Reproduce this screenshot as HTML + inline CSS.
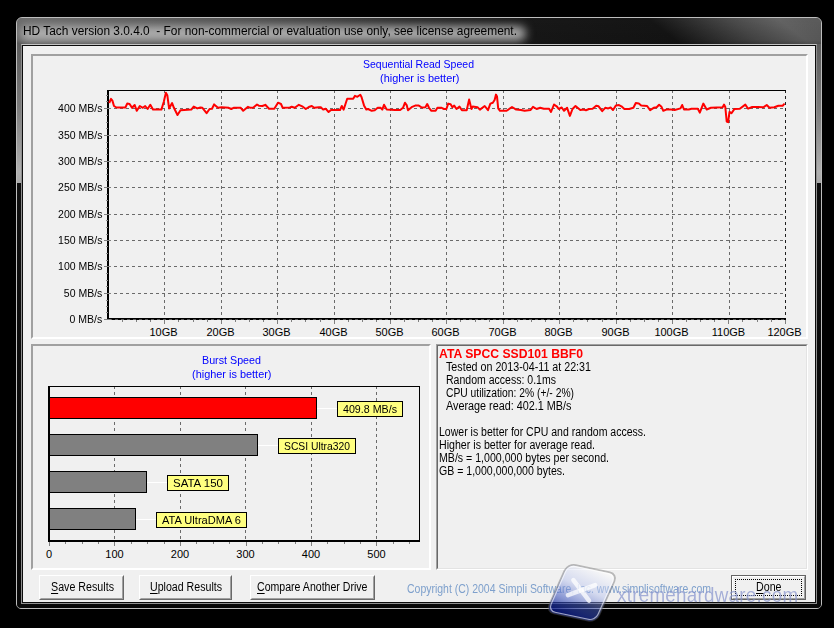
<!DOCTYPE html>
<html><head><meta charset="utf-8"><style>
*{margin:0;padding:0;box-sizing:border-box}
html,body{width:834px;height:628px;overflow:hidden;background:#000}
body{position:relative;font-family:"Liberation Sans",sans-serif;font-size:11px;color:#000}
.abs{position:absolute}
.t{position:absolute;white-space:nowrap;line-height:0;height:0}
#frame{left:16px;top:17px;width:806px;height:592px;border-radius:6px 6px 5px 5px;border:1px solid #bdbdbd;
 background:linear-gradient(90deg,#747474 0%,#5c5c5c 25%,#2e2e2e 50%,#181818 64%,#151515 79%,#4a4a4a 87%,#646464 94%,#5c5c5c 100%);overflow:hidden}
#frame .shade{position:absolute;left:0;top:0;right:0;bottom:0;background:linear-gradient(180deg,rgba(0,0,0,0) 0px,rgba(0,0,0,0.1) 22px,rgba(6,6,6,0.9) 45px,rgba(8,8,8,1) 100%)}
#frame .topsh{position:absolute;left:0;top:0;right:0;height:28px;background:linear-gradient(180deg,rgba(255,255,255,0.06),rgba(0,0,0,0))}
#glow{position:absolute;left:3px;top:8px;width:506px;height:15px;border-radius:8px;background:rgba(182,182,182,0.92);filter:blur(5px)}
.refl{position:absolute;top:26px;width:5px;height:139px;background:linear-gradient(180deg,#5c5c5c 0%,#7a7a7a 45%,#b0b0b0 92%,#a8a8a8 100%)}
#tb{position:absolute;left:0;top:0;width:804px;height:28px;background:linear-gradient(38deg,#6e6e6e 10px,#4c4c4c 172px,#2a2a2a 258px,#181818 326px,#151515 410px,#4a4a4a 460px,#646464 490px,#5c5c5c 510px)}
#inner1{left:21px;top:44px;width:796px;height:560px;border:1px solid #8e8e8e;border-top-color:#c4c4c4}
#inner2{left:22px;top:45px;width:794px;height:558px;border:1px solid #0c0c0c}
#client{left:23px;top:46px;width:792px;height:556px;background:#f0f0f0}
.panel{position:absolute;border:2px solid;border-color:#a0a0a0 #fff #fff #a0a0a0}
#info{position:absolute;left:436px;top:344px;width:372px;height:226px;border:1px solid;border-color:#a0a0a0 #fff #fff #a0a0a0}
#info .in{position:absolute;left:0;top:0;right:0;bottom:0;border:1px solid;border-color:#696969 #e3e3e3 #e3e3e3 #696969}
.btn{position:absolute;height:25px;background:#f0f0f0;border:1px solid;border-color:#fff #696969 #696969 #fff}
.btn .in{position:absolute;left:0;top:0;right:0;bottom:0;border:1px solid;border-color:#f0f0f0 #a0a0a0 #a0a0a0 #f0f0f0}
u{text-decoration:underline;text-underline-offset:2px}
#wm{position:absolute;left:560px;top:569px;width:46px;height:46px;border-radius:7px;transform:rotate(19deg);
 background:linear-gradient(180deg,rgba(250,252,255,0.9) 0%,rgba(170,185,235,0.85) 40%,rgba(60,80,170,0.85) 75%,rgba(10,25,110,0.9) 100%);
 border:1.5px solid rgba(200,200,200,0.9);box-shadow:0 0 2px rgba(0,0,0,0.5)}
.xs{position:absolute;background:rgba(255,255,255,0.85);border-radius:3px}
#wmt{position:absolute;left:617px;top:595px;font:21px "Liberation Sans";line-height:0;height:0;white-space:nowrap;color:rgba(75,95,180,0.48);text-shadow:0 0 1px rgba(255,255,255,0.5);transform:scaleX(0.895);transform-origin:0 0;letter-spacing:0.3px}
</style></head><body>
<div id="frame" class="abs"><div id="tb"></div><div class="shade"></div><div id="glow"></div><div class="refl" style="left:0"></div><div class="refl" style="right:0"></div></div>
<div id="inner1" class="abs"></div>
<div id="inner2" class="abs"></div>
<div id="client" class="abs"></div>
<div class="panel" style="left:31px;top:54px;width:777px;height:285px"></div>
<div class="panel" style="left:31px;top:344px;width:400px;height:226px"></div>
<div id="info"><div class="in"></div></div>
<div class="btn" style="left:39px;top:575px;width:85px"><div class="in"></div></div>
<div class="btn" style="left:139px;top:575px;width:93px"><div class="in"></div></div>
<div class="btn" style="left:250px;top:575px;width:125px"><div class="in"></div></div>
<div class="btn" style="left:731px;top:575px;width:75px;border:1px solid #646464"><div class="in" style="border-color:#fff #a0a0a0 #a0a0a0 #fff"></div><div class="abs" style="left:3px;top:3px;right:3px;bottom:3px;border:1px dotted #000"></div></div>
<svg class="abs" style="left:0;top:0" width="834" height="628" shape-rendering="crispEdges">
<line x1="108" y1="293.5" x2="785" y2="293.5" stroke="#6a6a6a" stroke-width="1" stroke-dasharray="3 3"/>
<line x1="108" y1="266.5" x2="785" y2="266.5" stroke="#6a6a6a" stroke-width="1" stroke-dasharray="3 3"/>
<line x1="108" y1="240.5" x2="785" y2="240.5" stroke="#6a6a6a" stroke-width="1" stroke-dasharray="3 3"/>
<line x1="108" y1="214.5" x2="785" y2="214.5" stroke="#6a6a6a" stroke-width="1" stroke-dasharray="3 3"/>
<line x1="108" y1="187.5" x2="785" y2="187.5" stroke="#6a6a6a" stroke-width="1" stroke-dasharray="3 3"/>
<line x1="108" y1="161.5" x2="785" y2="161.5" stroke="#6a6a6a" stroke-width="1" stroke-dasharray="3 3"/>
<line x1="108" y1="135.5" x2="785" y2="135.5" stroke="#6a6a6a" stroke-width="1" stroke-dasharray="3 3"/>
<line x1="108" y1="108.5" x2="785" y2="108.5" stroke="#6a6a6a" stroke-width="1" stroke-dasharray="3 3"/>
<line x1="164.5" y1="90" x2="164.5" y2="318" stroke="#6a6a6a" stroke-width="1" stroke-dasharray="3 3"/>
<line x1="221.5" y1="90" x2="221.5" y2="318" stroke="#6a6a6a" stroke-width="1" stroke-dasharray="3 3"/>
<line x1="277.5" y1="90" x2="277.5" y2="318" stroke="#6a6a6a" stroke-width="1" stroke-dasharray="3 3"/>
<line x1="334.5" y1="90" x2="334.5" y2="318" stroke="#6a6a6a" stroke-width="1" stroke-dasharray="3 3"/>
<line x1="390.5" y1="90" x2="390.5" y2="318" stroke="#6a6a6a" stroke-width="1" stroke-dasharray="3 3"/>
<line x1="446.5" y1="90" x2="446.5" y2="318" stroke="#6a6a6a" stroke-width="1" stroke-dasharray="3 3"/>
<line x1="503.5" y1="90" x2="503.5" y2="318" stroke="#6a6a6a" stroke-width="1" stroke-dasharray="3 3"/>
<line x1="559.5" y1="90" x2="559.5" y2="318" stroke="#6a6a6a" stroke-width="1" stroke-dasharray="3 3"/>
<line x1="616.5" y1="90" x2="616.5" y2="318" stroke="#6a6a6a" stroke-width="1" stroke-dasharray="3 3"/>
<line x1="672.5" y1="90" x2="672.5" y2="318" stroke="#6a6a6a" stroke-width="1" stroke-dasharray="3 3"/>
<line x1="729.5" y1="90" x2="729.5" y2="318" stroke="#6a6a6a" stroke-width="1" stroke-dasharray="3 3"/>
<line x1="785.5" y1="90" x2="785.5" y2="318" stroke="#202020" stroke-width="1" stroke-dasharray="3 3"/>
<line x1="122.5" y1="320" x2="122.5" y2="322" stroke="#808080" stroke-width="1"/>
<line x1="136.5" y1="320" x2="136.5" y2="322" stroke="#808080" stroke-width="1"/>
<line x1="150.5" y1="320" x2="150.5" y2="322" stroke="#808080" stroke-width="1"/>
<line x1="164.5" y1="318" x2="164.5" y2="324" stroke="#808080" stroke-width="1"/>
<line x1="178.5" y1="320" x2="178.5" y2="322" stroke="#808080" stroke-width="1"/>
<line x1="193.5" y1="320" x2="193.5" y2="322" stroke="#808080" stroke-width="1"/>
<line x1="207.5" y1="320" x2="207.5" y2="322" stroke="#808080" stroke-width="1"/>
<line x1="221.5" y1="318" x2="221.5" y2="324" stroke="#808080" stroke-width="1"/>
<line x1="235.5" y1="320" x2="235.5" y2="322" stroke="#808080" stroke-width="1"/>
<line x1="249.5" y1="320" x2="249.5" y2="322" stroke="#808080" stroke-width="1"/>
<line x1="263.5" y1="320" x2="263.5" y2="322" stroke="#808080" stroke-width="1"/>
<line x1="277.5" y1="318" x2="277.5" y2="324" stroke="#808080" stroke-width="1"/>
<line x1="291.5" y1="320" x2="291.5" y2="322" stroke="#808080" stroke-width="1"/>
<line x1="305.5" y1="320" x2="305.5" y2="322" stroke="#808080" stroke-width="1"/>
<line x1="320.5" y1="320" x2="320.5" y2="322" stroke="#808080" stroke-width="1"/>
<line x1="334.5" y1="318" x2="334.5" y2="324" stroke="#808080" stroke-width="1"/>
<line x1="348.5" y1="320" x2="348.5" y2="322" stroke="#808080" stroke-width="1"/>
<line x1="362.5" y1="320" x2="362.5" y2="322" stroke="#808080" stroke-width="1"/>
<line x1="376.5" y1="320" x2="376.5" y2="322" stroke="#808080" stroke-width="1"/>
<line x1="390.5" y1="318" x2="390.5" y2="324" stroke="#808080" stroke-width="1"/>
<line x1="404.5" y1="320" x2="404.5" y2="322" stroke="#808080" stroke-width="1"/>
<line x1="418.5" y1="320" x2="418.5" y2="322" stroke="#808080" stroke-width="1"/>
<line x1="432.5" y1="320" x2="432.5" y2="322" stroke="#808080" stroke-width="1"/>
<line x1="446.5" y1="318" x2="446.5" y2="324" stroke="#808080" stroke-width="1"/>
<line x1="460.5" y1="320" x2="460.5" y2="322" stroke="#808080" stroke-width="1"/>
<line x1="475.5" y1="320" x2="475.5" y2="322" stroke="#808080" stroke-width="1"/>
<line x1="489.5" y1="320" x2="489.5" y2="322" stroke="#808080" stroke-width="1"/>
<line x1="503.5" y1="318" x2="503.5" y2="324" stroke="#808080" stroke-width="1"/>
<line x1="517.5" y1="320" x2="517.5" y2="322" stroke="#808080" stroke-width="1"/>
<line x1="531.5" y1="320" x2="531.5" y2="322" stroke="#808080" stroke-width="1"/>
<line x1="545.5" y1="320" x2="545.5" y2="322" stroke="#808080" stroke-width="1"/>
<line x1="559.5" y1="318" x2="559.5" y2="324" stroke="#808080" stroke-width="1"/>
<line x1="573.5" y1="320" x2="573.5" y2="322" stroke="#808080" stroke-width="1"/>
<line x1="587.5" y1="320" x2="587.5" y2="322" stroke="#808080" stroke-width="1"/>
<line x1="602.5" y1="320" x2="602.5" y2="322" stroke="#808080" stroke-width="1"/>
<line x1="616.5" y1="318" x2="616.5" y2="324" stroke="#808080" stroke-width="1"/>
<line x1="630.5" y1="320" x2="630.5" y2="322" stroke="#808080" stroke-width="1"/>
<line x1="644.5" y1="320" x2="644.5" y2="322" stroke="#808080" stroke-width="1"/>
<line x1="658.5" y1="320" x2="658.5" y2="322" stroke="#808080" stroke-width="1"/>
<line x1="672.5" y1="318" x2="672.5" y2="324" stroke="#808080" stroke-width="1"/>
<line x1="686.5" y1="320" x2="686.5" y2="322" stroke="#808080" stroke-width="1"/>
<line x1="700.5" y1="320" x2="700.5" y2="322" stroke="#808080" stroke-width="1"/>
<line x1="714.5" y1="320" x2="714.5" y2="322" stroke="#808080" stroke-width="1"/>
<line x1="728.5" y1="318" x2="728.5" y2="324" stroke="#808080" stroke-width="1"/>
<line x1="742.5" y1="320" x2="742.5" y2="322" stroke="#808080" stroke-width="1"/>
<line x1="757.5" y1="320" x2="757.5" y2="322" stroke="#808080" stroke-width="1"/>
<line x1="771.5" y1="320" x2="771.5" y2="322" stroke="#808080" stroke-width="1"/>
<line x1="785.5" y1="318" x2="785.5" y2="324" stroke="#808080" stroke-width="1"/>
<rect x="107" y="90" width="679" height="1" fill="#000" />
<rect x="107" y="90" width="2" height="230" fill="#000" />
<rect x="107" y="318" width="679" height="2" fill="#000" />
<line x1="109" y1="319.5" x2="785" y2="319.5" stroke="#555555" stroke-width="1" stroke-dasharray="3 3"/>
<line x1="106" y1="115.5" x2="108" y2="115.5" stroke="#8a8a8a" stroke-width="1"/>
<line x1="106" y1="122.5" x2="108" y2="122.5" stroke="#8a8a8a" stroke-width="1"/>
<line x1="106" y1="128.5" x2="108" y2="128.5" stroke="#8a8a8a" stroke-width="1"/>
<line x1="106" y1="142.5" x2="108" y2="142.5" stroke="#8a8a8a" stroke-width="1"/>
<line x1="106" y1="148.5" x2="108" y2="148.5" stroke="#8a8a8a" stroke-width="1"/>
<line x1="106" y1="154.5" x2="108" y2="154.5" stroke="#8a8a8a" stroke-width="1"/>
<line x1="106" y1="168.5" x2="108" y2="168.5" stroke="#8a8a8a" stroke-width="1"/>
<line x1="106" y1="174.5" x2="108" y2="174.5" stroke="#8a8a8a" stroke-width="1"/>
<line x1="106" y1="180.5" x2="108" y2="180.5" stroke="#8a8a8a" stroke-width="1"/>
<line x1="106" y1="194.5" x2="108" y2="194.5" stroke="#8a8a8a" stroke-width="1"/>
<line x1="106" y1="200.5" x2="108" y2="200.5" stroke="#8a8a8a" stroke-width="1"/>
<line x1="106" y1="207.5" x2="108" y2="207.5" stroke="#8a8a8a" stroke-width="1"/>
<line x1="106" y1="220.5" x2="108" y2="220.5" stroke="#8a8a8a" stroke-width="1"/>
<line x1="106" y1="227.5" x2="108" y2="227.5" stroke="#8a8a8a" stroke-width="1"/>
<line x1="106" y1="234.5" x2="108" y2="234.5" stroke="#8a8a8a" stroke-width="1"/>
<line x1="106" y1="246.5" x2="108" y2="246.5" stroke="#8a8a8a" stroke-width="1"/>
<line x1="106" y1="253.5" x2="108" y2="253.5" stroke="#8a8a8a" stroke-width="1"/>
<line x1="106" y1="260.5" x2="108" y2="260.5" stroke="#8a8a8a" stroke-width="1"/>
<line x1="106" y1="273.5" x2="108" y2="273.5" stroke="#8a8a8a" stroke-width="1"/>
<line x1="106" y1="280.5" x2="108" y2="280.5" stroke="#8a8a8a" stroke-width="1"/>
<line x1="106" y1="286.5" x2="108" y2="286.5" stroke="#8a8a8a" stroke-width="1"/>
<line x1="106" y1="300.5" x2="108" y2="300.5" stroke="#8a8a8a" stroke-width="1"/>
<line x1="106" y1="306.5" x2="108" y2="306.5" stroke="#8a8a8a" stroke-width="1"/>
<line x1="106" y1="312.5" x2="108" y2="312.5" stroke="#8a8a8a" stroke-width="1"/>
<line x1="106" y1="101.5" x2="108" y2="101.5" stroke="#8a8a8a" stroke-width="1"/>
<line x1="106" y1="95.5" x2="108" y2="95.5" stroke="#8a8a8a" stroke-width="1"/>
<line x1="104" y1="108.5" x2="111" y2="108.5" stroke="#808080" stroke-width="1"/>
<line x1="104" y1="135.5" x2="111" y2="135.5" stroke="#808080" stroke-width="1"/>
<line x1="104" y1="161.5" x2="111" y2="161.5" stroke="#808080" stroke-width="1"/>
<line x1="104" y1="187.5" x2="111" y2="187.5" stroke="#808080" stroke-width="1"/>
<line x1="104" y1="214.5" x2="111" y2="214.5" stroke="#808080" stroke-width="1"/>
<line x1="104" y1="240.5" x2="111" y2="240.5" stroke="#808080" stroke-width="1"/>
<line x1="104" y1="266.5" x2="111" y2="266.5" stroke="#808080" stroke-width="1"/>
<line x1="104" y1="293.5" x2="111" y2="293.5" stroke="#808080" stroke-width="1"/>
<line x1="104" y1="319.5" x2="111" y2="319.5" stroke="#808080" stroke-width="1"/>
<polyline points="109.2,103 111,98.8 112.4,100.6 114,106 116.4,107.5 125.4,107.5 127.2,103.6 129.6,104 132,107.8 134.7,105 136.8,110.8 139.8,106 142.8,107.8 145.2,106 147.6,109 150.3,104.8 153,109.6 161.4,109.6 163.8,101.8 165.9,92.8 167.3,95.2 169.1,108.4 172.1,103 173.9,107.8 177.5,115 180.5,110.2 191.3,109.6 193.7,106.6 197.3,108.4 200.3,107.5 202.4,107.8 206.6,113.2 209.6,109 212,108.7 214.1,104.4 218,107.8 221.6,107.2 228.8,107.8 231.2,109 233.6,107.8 240.8,107.8 243.2,110.8 248,106.8 250.4,107.8 253.4,107.5 257,104.5 258.8,105.7 262.4,106 265.3,104.8 269,108.7 274.3,108.7 278,102.7 281,104 282.7,107.8 289.9,107.5 291.7,106.8 294.7,107.8 298.9,104.8 302.2,106.3 305.8,109 308.8,107 311.8,106 314.2,107.8 319,107.2 320.8,107.2 323.2,109.6 325.6,108.7 328.6,112 331,110 340,110 341.8,106 343.6,109.6 345.4,104.2 347.2,98.8 353.2,98.8 355,95.8 357.4,96.8 360.3,94.8 361.5,97 364,105.4 366.3,109.6 368.1,109 371.7,110.8 374.7,110.2 377.7,107.8 380.7,107.8 382.3,109.6 384,104.8 386.7,109.6 395,110 400.2,110 403,107.8 405,102.7 406.8,105.4 408,110.2 411.6,107.2 415.2,105.6 418.8,105.6 421.8,107.5 425.4,107.2 427.2,104 429,107.8 431.4,110.8 435.6,110.8 437.4,107.8 441.6,107.8 444,109 446.4,109 448.2,103.6 450.6,104.2 452.4,107.2 454.2,105.6 456.5,109 459.5,106.6 461.9,110.2 466.7,110.2 469.1,99.6 471.5,109 472.7,106.6 477.5,107.2 479.9,109.6 484.7,106 488,110.2 490.4,103.6 492.8,102.7 494.6,100 496,94.6 497,96.4 498.2,108.4 500,110.8 506.6,110.8 512,107 516.2,109.6 521,110 524.6,110.8 530.6,110 533,106.8 536.6,109 540.2,107.8 543.8,108.7 549.1,108.7 551,112 554,104.5 557,106.6 558.7,109 561.7,107.5 564.1,110.8 567.1,107.8 569.9,115.9 572.5,109 575.5,106 580.3,110 583.6,109.6 586,110.2 589,109 592.6,108.7 596.2,105.7 598.6,106.3 602.2,111.1 605.2,107.8 608.2,108.4 610.6,107.5 613,110 616,105.4 619,105.1 621.4,106.3 624.4,109 629.2,109 633.4,107.8 635.8,103 638.8,103.6 641.2,105.6 647.1,106 650.1,110.2 653.7,107.8 656.7,107.2 659.1,104.8 661.5,106.8 663.3,110.8 666.3,109.6 671.1,109.6 674.7,110 680.5,108.4 682.2,105 684,109.5 688.8,109.5 691.5,108.7 697.8,108.7 699.8,112.6 703.3,103.6 706.7,109.5 710.9,107.8 722.6,107.3 724,104.6 725.3,107 726.7,121.5 728.1,122.2 729.5,111.9 731.5,113.3 734.3,109.1 739.8,108.7 745.3,104.6 748.1,108.7 752.2,107 757.7,107 763.3,107.3 766.7,105 769.5,107.8 774.3,107.3 778.4,105.7 782.6,105.7 784.6,103.6" fill="none" stroke="#ff0000" stroke-width="2" stroke-linejoin="round" shape-rendering="geometricPrecision"/>
<line x1="114.5" y1="386" x2="114.5" y2="540" stroke="#6a6a6a" stroke-width="1" stroke-dasharray="3 3"/>
<line x1="180.5" y1="386" x2="180.5" y2="540" stroke="#6a6a6a" stroke-width="1" stroke-dasharray="3 3"/>
<line x1="245.5" y1="386" x2="245.5" y2="540" stroke="#6a6a6a" stroke-width="1" stroke-dasharray="3 3"/>
<line x1="311.5" y1="386" x2="311.5" y2="540" stroke="#6a6a6a" stroke-width="1" stroke-dasharray="3 3"/>
<line x1="376.5" y1="386" x2="376.5" y2="540" stroke="#6a6a6a" stroke-width="1" stroke-dasharray="3 3"/>
<rect x="49.5" y="397.5" width="267" height="21" fill="#ff0000" stroke="#000" stroke-width="1"/>
<line x1="317" y1="408.5" x2="337" y2="408.5" stroke="#ffffff" stroke-width="1"/>
<rect x="337.5" y="401.5" width="65" height="15" fill="#ffff80" stroke="#000" stroke-width="1"/>
<rect x="49.5" y="434.5" width="208" height="21" fill="#808080" stroke="#000" stroke-width="1"/>
<line x1="258" y1="445.5" x2="278" y2="445.5" stroke="#ffffff" stroke-width="1"/>
<rect x="278.5" y="438.5" width="77" height="15" fill="#ffff80" stroke="#000" stroke-width="1"/>
<rect x="49.5" y="471.5" width="97" height="21" fill="#808080" stroke="#000" stroke-width="1"/>
<line x1="147" y1="482.5" x2="167" y2="482.5" stroke="#ffffff" stroke-width="1"/>
<rect x="167.5" y="475.5" width="61" height="15" fill="#ffff80" stroke="#000" stroke-width="1"/>
<rect x="49.5" y="508.5" width="86" height="21" fill="#808080" stroke="#000" stroke-width="1"/>
<line x1="136" y1="519.5" x2="156" y2="519.5" stroke="#ffffff" stroke-width="1"/>
<rect x="156.5" y="512.5" width="90" height="15" fill="#ffff80" stroke="#000" stroke-width="1"/>
<rect x="48" y="386" width="372" height="1" fill="#000" />
<rect x="419" y="386" width="1" height="156" fill="#000" />
<rect x="48" y="386" width="2" height="156" fill="#000" />
<rect x="48" y="540" width="372" height="2" fill="#000" />
<line x1="49.5" y1="542" x2="49.5" y2="546" stroke="#808080" stroke-width="1"/>
<line x1="65.5" y1="542" x2="65.5" y2="544" stroke="#808080" stroke-width="1"/>
<line x1="82.5" y1="542" x2="82.5" y2="544" stroke="#808080" stroke-width="1"/>
<line x1="98.5" y1="542" x2="98.5" y2="544" stroke="#808080" stroke-width="1"/>
<line x1="114.5" y1="542" x2="114.5" y2="546" stroke="#808080" stroke-width="1"/>
<line x1="131.5" y1="542" x2="131.5" y2="544" stroke="#808080" stroke-width="1"/>
<line x1="147.5" y1="542" x2="147.5" y2="544" stroke="#808080" stroke-width="1"/>
<line x1="164.5" y1="542" x2="164.5" y2="544" stroke="#808080" stroke-width="1"/>
<line x1="180.5" y1="542" x2="180.5" y2="546" stroke="#808080" stroke-width="1"/>
<line x1="196.5" y1="542" x2="196.5" y2="544" stroke="#808080" stroke-width="1"/>
<line x1="213.5" y1="542" x2="213.5" y2="544" stroke="#808080" stroke-width="1"/>
<line x1="229.5" y1="542" x2="229.5" y2="544" stroke="#808080" stroke-width="1"/>
<line x1="246.5" y1="542" x2="246.5" y2="546" stroke="#808080" stroke-width="1"/>
<line x1="262.5" y1="542" x2="262.5" y2="544" stroke="#808080" stroke-width="1"/>
<line x1="278.5" y1="542" x2="278.5" y2="544" stroke="#808080" stroke-width="1"/>
<line x1="295.5" y1="542" x2="295.5" y2="544" stroke="#808080" stroke-width="1"/>
<line x1="311.5" y1="542" x2="311.5" y2="546" stroke="#808080" stroke-width="1"/>
<line x1="327.5" y1="542" x2="327.5" y2="544" stroke="#808080" stroke-width="1"/>
<line x1="344.5" y1="542" x2="344.5" y2="544" stroke="#808080" stroke-width="1"/>
<line x1="360.5" y1="542" x2="360.5" y2="544" stroke="#808080" stroke-width="1"/>
<line x1="376.5" y1="542" x2="376.5" y2="546" stroke="#808080" stroke-width="1"/>
<line x1="393.5" y1="542" x2="393.5" y2="544" stroke="#808080" stroke-width="1"/>
<line x1="409.5" y1="542" x2="409.5" y2="544" stroke="#808080" stroke-width="1"/>
</svg>
<div class="t" style="left:23.00px;top:31px;font:12px 'Liberation Sans';line-height:0;color:#000;transform:scaleX(0.9910);transform-origin:0 0;">HD Tach version 3.0.4.0&nbsp; - For non-commercial or evaluation use only, see license agreement.</div>
<div class="t" style="left:363.00px;top:64px;font:11px 'Liberation Sans';line-height:0;color:#0000ff;transform:scaleX(0.9551);transform-origin:0 0;">Sequential Read Speed</div>
<div class="t" style="left:380.00px;top:78px;font:11px 'Liberation Sans';line-height:0;color:#0000ff;transform:scaleX(0.9926);transform-origin:0 0;">(higher is better)</div>
<div class="t" style="left:202.00px;top:360px;font:11px 'Liberation Sans';line-height:0;color:#0000ff;transform:scaleX(0.9745);transform-origin:0 0;">Burst Speed</div>
<div class="t" style="left:192.00px;top:374px;font:11px 'Liberation Sans';line-height:0;color:#0000ff;transform:scaleX(0.9926);transform-origin:0 0;">(higher is better)</div>
<div class="t" style="left:55.53px;top:108px;font:11px 'Liberation Sans';line-height:0;color:#000;transform:scaleX(0.9550);transform-origin:100% 0;">400 MB/s</div>
<div class="t" style="left:55.53px;top:135px;font:11px 'Liberation Sans';line-height:0;color:#000;transform:scaleX(0.9550);transform-origin:100% 0;">350 MB/s</div>
<div class="t" style="left:55.53px;top:161px;font:11px 'Liberation Sans';line-height:0;color:#000;transform:scaleX(0.9550);transform-origin:100% 0;">300 MB/s</div>
<div class="t" style="left:55.53px;top:187px;font:11px 'Liberation Sans';line-height:0;color:#000;transform:scaleX(0.9550);transform-origin:100% 0;">250 MB/s</div>
<div class="t" style="left:55.53px;top:214px;font:11px 'Liberation Sans';line-height:0;color:#000;transform:scaleX(0.9550);transform-origin:100% 0;">200 MB/s</div>
<div class="t" style="left:55.53px;top:240px;font:11px 'Liberation Sans';line-height:0;color:#000;transform:scaleX(0.9550);transform-origin:100% 0;">150 MB/s</div>
<div class="t" style="left:55.53px;top:266px;font:11px 'Liberation Sans';line-height:0;color:#000;transform:scaleX(0.9550);transform-origin:100% 0;">100 MB/s</div>
<div class="t" style="left:61.64px;top:293px;font:11px 'Liberation Sans';line-height:0;color:#000;transform:scaleX(0.9550);transform-origin:100% 0;">50 MB/s</div>
<div class="t" style="left:67.77px;top:319px;font:11px 'Liberation Sans';line-height:0;color:#000;transform:scaleX(0.9550);transform-origin:100% 0;">0 MB/s</div>
<div class="t" style="left:149.43px;top:332px;font:11px 'Liberation Sans';line-height:0;color:#000;">10GB</div>
<div class="t" style="left:206.43px;top:332px;font:11px 'Liberation Sans';line-height:0;color:#000;">20GB</div>
<div class="t" style="left:262.43px;top:332px;font:11px 'Liberation Sans';line-height:0;color:#000;">30GB</div>
<div class="t" style="left:319.43px;top:332px;font:11px 'Liberation Sans';line-height:0;color:#000;">40GB</div>
<div class="t" style="left:375.43px;top:332px;font:11px 'Liberation Sans';line-height:0;color:#000;">50GB</div>
<div class="t" style="left:431.43px;top:332px;font:11px 'Liberation Sans';line-height:0;color:#000;">60GB</div>
<div class="t" style="left:488.43px;top:332px;font:11px 'Liberation Sans';line-height:0;color:#000;">70GB</div>
<div class="t" style="left:544.43px;top:332px;font:11px 'Liberation Sans';line-height:0;color:#000;">80GB</div>
<div class="t" style="left:601.43px;top:332px;font:11px 'Liberation Sans';line-height:0;color:#000;">90GB</div>
<div class="t" style="left:654.38px;top:332px;font:11px 'Liberation Sans';line-height:0;color:#000;">100GB</div>
<div class="t" style="left:711.78px;top:332px;font:11px 'Liberation Sans';line-height:0;color:#000;">110GB</div>
<div class="t" style="left:767.38px;top:332px;font:11px 'Liberation Sans';line-height:0;color:#000;">120GB</div>
<div class="t" style="left:45.94px;top:554px;font:11px 'Liberation Sans';line-height:0;color:#000;">0</div>
<div class="t" style="left:105.32px;top:554px;font:11px 'Liberation Sans';line-height:0;color:#000;">100</div>
<div class="t" style="left:170.82px;top:554px;font:11px 'Liberation Sans';line-height:0;color:#000;">200</div>
<div class="t" style="left:236.32px;top:554px;font:11px 'Liberation Sans';line-height:0;color:#000;">300</div>
<div class="t" style="left:301.82px;top:554px;font:11px 'Liberation Sans';line-height:0;color:#000;">400</div>
<div class="t" style="left:367.32px;top:554px;font:11px 'Liberation Sans';line-height:0;color:#000;">500</div>
<div class="t" style="left:343.00px;top:409px;font:11px 'Liberation Sans';line-height:0;color:#000;transform:scaleX(0.9705);transform-origin:0 0;">409.8 MB/s</div>
<div class="t" style="left:284.00px;top:446px;font:11px 'Liberation Sans';line-height:0;color:#000;transform:scaleX(0.9387);transform-origin:0 0;">SCSI Ultra320</div>
<div class="t" style="left:173.00px;top:483px;font:11px 'Liberation Sans';line-height:0;color:#000;transform:scaleX(1.0437);transform-origin:0 0;">SATA 150</div>
<div class="t" style="left:162.00px;top:520px;font:11px 'Liberation Sans';line-height:0;color:#000;transform:scaleX(1.0070);transform-origin:0 0;">ATA UltraDMA 6</div>
<div class="t" style="left:439.00px;top:354px;font:bold 12px 'Liberation Sans';line-height:0;color:#ff0000;transform:scaleX(1.0154);transform-origin:0 0;">ATA SPCC SSD101 BBF0</div>
<div class="t" style="left:446.00px;top:367px;font:12px 'Liberation Sans';line-height:0;color:#000;transform:scaleX(0.8919);transform-origin:0 0;">Tested on 2013-04-11 at 22:31</div>
<div class="t" style="left:446.00px;top:380px;font:12px 'Liberation Sans';line-height:0;color:#000;transform:scaleX(0.8773);transform-origin:0 0;">Random access: 0.1ms</div>
<div class="t" style="left:446.00px;top:393px;font:12px 'Liberation Sans';line-height:0;color:#000;transform:scaleX(0.8587);transform-origin:0 0;">CPU utilization: 2% (+/- 2%)</div>
<div class="t" style="left:446.00px;top:406px;font:12px 'Liberation Sans';line-height:0;color:#000;transform:scaleX(0.9016);transform-origin:0 0;">Average read: 402.1 MB/s</div>
<div class="t" style="left:439.00px;top:432px;font:12px 'Liberation Sans';line-height:0;color:#000;transform:scaleX(0.8767);transform-origin:0 0;">Lower is better for CPU and random access.</div>
<div class="t" style="left:439.00px;top:445px;font:12px 'Liberation Sans';line-height:0;color:#000;transform:scaleX(0.8859);transform-origin:0 0;">Higher is better for average read.</div>
<div class="t" style="left:439.00px;top:458px;font:12px 'Liberation Sans';line-height:0;color:#000;transform:scaleX(0.8833);transform-origin:0 0;">MB/s = 1,000,000 bytes per second.</div>
<div class="t" style="left:439.00px;top:471px;font:12px 'Liberation Sans';line-height:0;color:#000;transform:scaleX(0.8804);transform-origin:0 0;">GB = 1,000,000,000 bytes.</div>
<div class="t" style="left:51.00px;top:587px;font:12px 'Liberation Sans';line-height:0;color:#000;transform:scaleX(0.8910);transform-origin:0 0;"><u>S</u>ave Results</div>
<div class="t" style="left:150.00px;top:587px;font:12px 'Liberation Sans';line-height:0;color:#000;transform:scaleX(0.8848);transform-origin:0 0;"><u>U</u>pload Results</div>
<div class="t" style="left:257.00px;top:587px;font:12px 'Liberation Sans';line-height:0;color:#000;transform:scaleX(0.8812);transform-origin:0 0;"><u>C</u>ompare Another Drive</div>
<div class="t" style="left:756.00px;top:587px;font:12px 'Liberation Sans';line-height:0;color:#000;transform:scaleX(0.8889);transform-origin:0 0;"><u>D</u>one</div>
<div class="t" style="left:407.00px;top:589px;font:12px 'Liberation Sans';line-height:0;color:#7ea0cc;transform:scaleX(0.8732);transform-origin:0 0;">Copyright (C) 2004 Simpli Software, Inc. www.simplisoftware.com</div>
<svg class="abs" style="left:0;top:0" width="834" height="628">
<defs><linearGradient id="wg" x1="0.6" y1="0" x2="0.4" y2="1">
<stop offset="0" stop-color="#ffffff" stop-opacity="0.5"/>
<stop offset="0.4" stop-color="#b4c0ee" stop-opacity="0.45"/>
<stop offset="0.7" stop-color="#4058c0" stop-opacity="0.55"/>
<stop offset="1" stop-color="#0a1a88" stop-opacity="0.8"/>
</linearGradient></defs>
<g transform="matrix(0.978 0.208 -0.407 0.914 567.7 563.4)">
<rect x="0" y="0" width="51" height="53" rx="8" fill="url(#wg)" stroke="#606060" stroke-opacity="0.4" stroke-width="1.8"/>
<rect x="1.5" y="1.5" width="48" height="50" rx="7" fill="none" stroke="#ffffff" stroke-opacity="0.6" stroke-width="1.2"/>
</g>
<g stroke="#ffffff" stroke-opacity="0.75" stroke-width="4.5" stroke-linecap="round">
<line x1="573.4" y1="580.1" x2="589" y2="600.7"/>
<line x1="567.9" y1="595.1" x2="595.2" y2="585.1"/>
</g>
</svg>
<div id="wmt">xtremehardware.com</div>
</body></html>
